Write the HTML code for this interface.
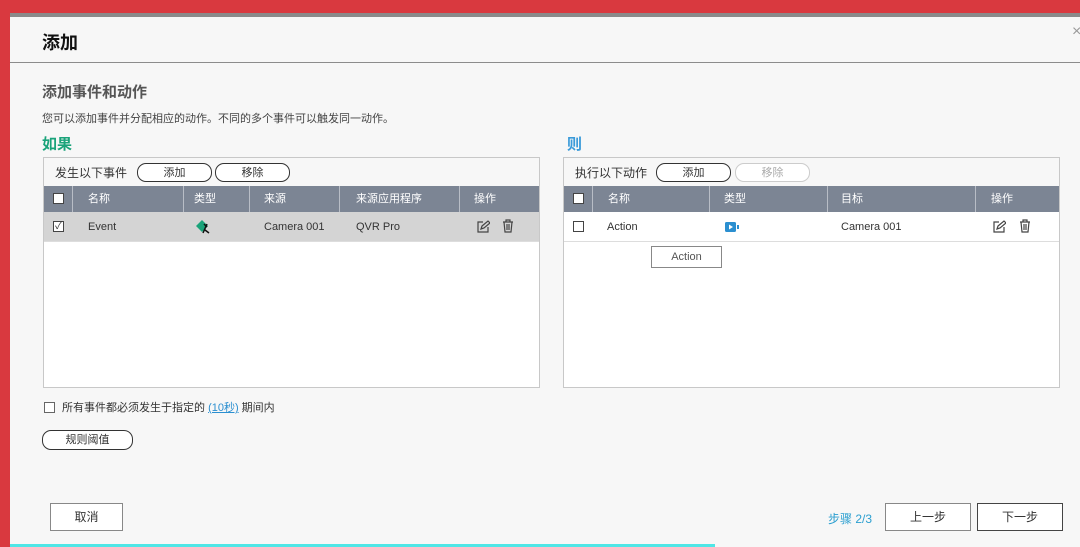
<!DOCTYPE html>
<html><head><meta charset="utf-8"><style>
*{margin:0;padding:0;box-sizing:border-box}
body{width:1080px;height:547px;overflow:hidden;background:#d9393f;font-family:"Liberation Sans","Noto Sans CJK SC",sans-serif;position:relative}
.topbar{position:absolute;left:10px;top:13px;width:1070px;height:4px;background:#8a8a8a}
.dlg{position:absolute;left:10px;top:17px;width:1070px;height:530px;background:#f7f7f7}
.hdr{position:absolute;left:0;top:0;width:100%;height:46px;border-bottom:1px solid #8c8c8c}
.abs{position:absolute}
.panel{position:absolute;border:1px solid #c8c8c8;background:#fff}
.tb{height:28px;background:#f7f7f7;position:relative;font-size:12px;color:#333}
.btn{position:absolute;border:1px solid #333;border-radius:9px;height:19px;font-size:11px;text-align:center;line-height:19px;color:#333;background:#fff}
.th{height:26px;background:#7c8594;color:#fff;font-size:11px;position:relative}
.th span,.row span{position:absolute;top:0;line-height:26px}
.sep{position:absolute;top:0;width:1px;height:26px;background:#b8bdc6}
.row{height:30px;position:relative;font-size:11px;color:#333;border-bottom:1px solid #ddd}
.row span{line-height:30px}
.row svg{position:absolute}
.cb{position:absolute;width:11px;height:11px;border:1px solid #444;background:#fff}
.fb{position:absolute;border:1px solid #888;background:#fff;font-size:12px;color:#333;text-align:center}
</style></head><body>
<div class="topbar"></div>
<div class="dlg">
 <div class="hdr"><div class="abs" style="left:32px;top:12px;font-size:18px;font-weight:bold;color:#111">添加</div>
 <div class="abs" style="left:1062px;top:6px;font-size:16px;color:#999">×</div></div>
 <div class="abs" style="left:32px;top:64px;font-size:15px;color:#555;font-weight:bold">添加事件和动作</div>
 <div class="abs" style="left:32px;top:93px;font-size:11px;color:#444">您可以添加事件并分配相应的动作。不同的多个事件可以触发同一动作。</div>
 <div class="abs" style="left:32px;top:116px;font-size:15px;color:#1aa37a;font-weight:bold">如果</div>
 <div class="abs" style="left:557px;top:116px;font-size:15px;color:#3a9ad9;font-weight:bold">则</div>

 <div class="panel" style="left:33px;top:140px;width:497px;height:231px">
  <div class="tb"><span class="abs" style="left:11px;top:6px">发生以下事件</span>
   <div class="btn" style="left:93px;top:5px;width:75px">添加</div>
   <div class="btn" style="left:171px;top:5px;width:75px">移除</div></div>
  <div class="th"><div class="cb" style="left:9px;top:7px"></div>
   <div class="sep" style="left:28px"></div><span style="left:44px">名称</span>
   <div class="sep" style="left:139px"></div><span style="left:150px">类型</span>
   <div class="sep" style="left:205px"></div><span style="left:220px">来源</span>
   <div class="sep" style="left:295px"></div><span style="left:312px">来源应用程序</span>
   <div class="sep" style="left:415px"></div><span style="left:430px">操作</span></div>
  <div class="row" style="background:#d4d4d4"><div class="cb" style="left:9px;top:9px;font-size:10px;line-height:9px;text-align:center">✓</div>
   <span style="left:44px">Event</span>
   <svg style="left:151px;top:7px" width="18" height="16"><path d="M1 7L7 1L13 7L7 13Z" fill="#1aa37a"/><path d="M9 5l3 3M12 5l-4 9M10 11l4 3" stroke="#111" stroke-width="1.5" fill="none"/></svg>
   <span style="left:220px">Camera 001</span><span style="left:312px">QVR Pro</span>
   <svg style="left:432px;top:8px" width="14" height="14"><path d="M7 2H2v10h10V7" stroke="#444" fill="none" stroke-width="1.2"/><path d="M5 9l1-3 6-5 2 2-6 5z" stroke="#444" fill="none" stroke-width="1.2"/></svg>
   <svg style="left:458px;top:7px" width="12" height="14"><path d="M1 3h10M4 3V1h4v2M2 3l1 10h6l1-10M5 5v6M7 5v6" stroke="#444" fill="none" stroke-width="1.2"/></svg></div>
 </div>

 <div class="panel" style="left:553px;top:140px;width:497px;height:231px">
  <div class="tb"><span class="abs" style="left:11px;top:6px">执行以下动作</span>
   <div class="btn" style="left:92px;top:5px;width:75px">添加</div>
   <div class="btn" style="left:171px;top:5px;width:75px;border-color:#ccc;color:#aaa">移除</div></div>
  <div class="th"><div class="cb" style="left:9px;top:7px"></div>
   <div class="sep" style="left:28px"></div><span style="left:44px">名称</span>
   <div class="sep" style="left:145px"></div><span style="left:160px">类型</span>
   <div class="sep" style="left:263px"></div><span style="left:277px">目标</span>
   <div class="sep" style="left:411px"></div><span style="left:427px">操作</span></div>
  <div class="row"><div class="cb" style="left:9px;top:9px"></div>
   <span style="left:43px">Action</span>
   <svg style="left:161px;top:10px" width="17" height="11"><rect x="0" y="0" width="11" height="10" rx="1.5" fill="#2b8fd0"/><path d="M4 2.5L8 5L4 7.5Z" fill="#fff"/><path d="M12 3h2v4h-2z" fill="#2b8fd0"/></svg>
   <span style="left:277px">Camera 001</span>
   <svg style="left:428px;top:8px" width="14" height="14"><path d="M7 2H2v10h10V7" stroke="#444" fill="none" stroke-width="1.2"/><path d="M5 9l1-3 6-5 2 2-6 5z" stroke="#444" fill="none" stroke-width="1.2"/></svg>
   <svg style="left:455px;top:7px" width="12" height="14"><path d="M1 3h10M4 3V1h4v2M2 3l1 10h6l1-10M5 5v6M7 5v6" stroke="#444" fill="none" stroke-width="1.2"/></svg></div>
  <div class="abs" style="left:87px;top:88px;width:71px;height:22px;border:1px solid #888;background:#fff;font-size:11px;color:#555;text-align:center;line-height:20px">Action</div>
 </div>

 <div class="cb" style="left:34px;top:385px;border-color:#666"></div>
 <div class="abs" style="left:52px;top:382px;font-size:11px;color:#333">所有事件都必须发生于指定的 <span style="color:#2b8fd0;text-decoration:underline">(10秒)</span> 期间内</div>
 <div class="btn" style="left:32px;top:413px;width:91px;height:20px;font-size:11px">规则阈值</div>

 <div class="fb" style="left:40px;top:486px;width:73px;height:28px;line-height:26px">取消</div>
 <div class="abs" style="left:818px;top:493px;font-size:12px;color:#2b9fd0">步骤 2/3</div>
 <div class="fb" style="left:875px;top:486px;width:86px;height:28px;line-height:26px">上一步</div>
 <div class="fb" style="left:967px;top:486px;width:86px;height:28px;line-height:26px;border-color:#444">下一步</div>
 <div class="abs" style="left:0;top:527px;width:705px;height:3px;background:#4fe6e6"></div>
</div>
</body></html>
